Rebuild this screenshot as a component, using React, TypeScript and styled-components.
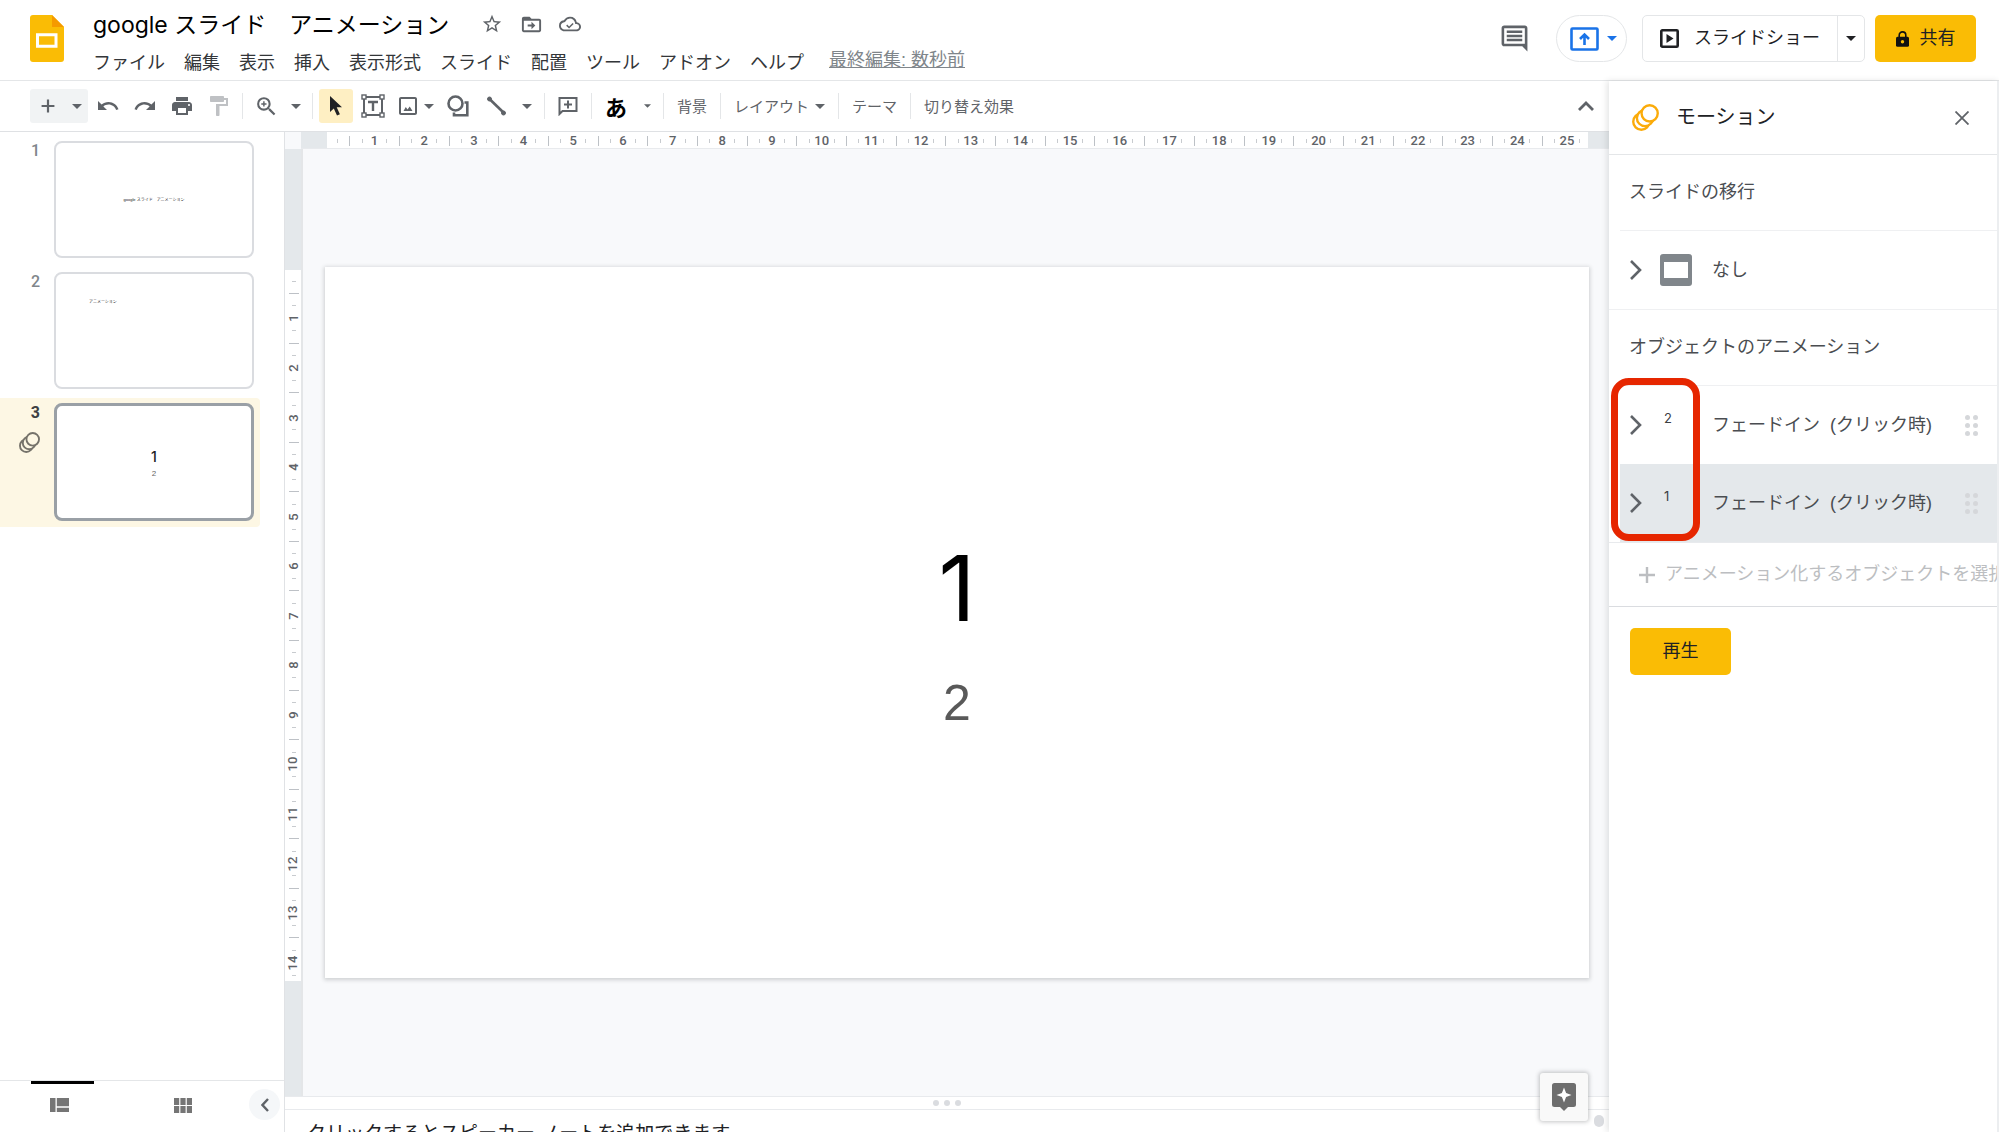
import React from "react";
import styled, { createGlobalStyle } from "styled-components";

const GlobalStyle = createGlobalStyle`
  *, *::before, *::after { box-sizing: border-box; }
  body { margin: 0; background: #fff; }
  body, button, input, textarea {
    font-family: "Liberation Sans", "Noto Sans CJK JP", sans-serif;
  }
  button {
    border: 0; padding: 0; margin: 0; background: none; color: inherit;
    font-size: 18px; display: inline-flex; align-items: center; justify-content: center;
    flex: none; white-space: nowrap; cursor: pointer;
  }
  h1, h2, h3, p, ul, ol { margin: 0; padding: 0; font-weight: 400; list-style: none; }
  svg { display: block; flex: none; }
`;

const gray = "#5f6368";
const line = "#e4e6e8";
const digits = `Inter, "Liberation Sans", sans-serif`;

const Page = styled.div`
  height: 100vh;
  display: flex;
  flex-direction: column;
  overflow: hidden;
  color: #202124;
`;

/* ---------- header ---------- */

const Header = styled.header`
  flex: none;
  display: flex;
  height: 81px;
  padding: 0 23px 0 30px;
  border-bottom: 1px solid ${line};
`;

const Logo = styled.a`
  margin-top: 15px;
  width: 34px;
`;

const Titles = styled.div`
  flex: 1;
  min-width: 0;
  padding: 7px 0 0 29px;
`;

const TitleRow = styled.div`
  display: flex;
  align-items: center;
  height: 34px;
  gap: 13px;
  color: ${gray};
`;

const DocTitle = styled.input`
  width: 373px;
  height: 34px;
  border: 0;
  padding: 0 0 3px;
  font-family: Inter, "Noto Sans CJK JP", sans-serif;
  font-size: 23px;
  color: #000;
  background: none;
`;

const SmallIconButton = styled.button`
  width: 26px;
  height: 26px;
`;

const MenuRow = styled.nav`
  display: flex;
  align-items: center;
  height: 40px;
  gap: 19px;
`;

const MenuItem = styled.button`
  height: 28px;
  color: #333639;
`;

const LastEdit = styled.a`
  margin-left: 6px;
  padding-bottom: 3px;
  font-size: 18px;
  line-height: 24px;
  white-space: nowrap;
  color: #80868b;
  text-decoration: underline;
`;

const Actions = styled.div`
  flex: none;
  display: flex;
  align-items: flex-start;
  padding-top: 15px;
`;

const CommentsButton = styled.button`
  width: 48px;
  height: 46px;
  margin-right: 18px;
  color: ${gray};
`;

const PresentButton = styled.button`
  width: 71px;
  height: 47px;
  gap: 8px;
  margin-right: 15px;
  padding-left: 4px;
  border: 1px solid ${line};
  border-radius: 24px;
  color: #1a73e8;
`;

const SlideshowGroup = styled.div`
  display: flex;
  height: 47px;
  margin-right: 10px;
  border: 1px solid ${line};
  border-radius: 5px;
`;

const SlideshowButton = styled.button`
  width: 194px;
  gap: 15px;
`;

const SlideshowMore = styled.button`
  width: 27px;
  border-left: 1px solid ${line};
`;

const YellowButton = styled.button`
  width: 101px;
  height: 47px;
  gap: 11px;
  border-radius: 5px;
  background: #fabc05;
  color: #202124;
`;

const ButtonText = styled.span`
  padding-bottom: 6px;
`;

/* ---------- body layout ---------- */

const Below = styled.div`
  flex: 1;
  min-height: 0;
  display: flex;
`;

const Editor = styled.div`
  flex: 1;
  min-width: 0;
  display: flex;
  flex-direction: column;
`;

const Toolbar = styled.div`
  flex: none;
  display: flex;
  align-items: center;
  gap: 3px;
  height: 51px;
  padding: 0 6px 0 30px;
  border-bottom: 1px solid #dfe1e4;
  color: ${gray};
`;

const NewGroup = styled.div`
  display: flex;
  height: 34px;
  background: #f1f3f4;
  border-radius: 3px;
`;

const Tool = styled.button<{ $w?: number; $on?: boolean; $off?: boolean }>`
  width: ${(p) => p.$w ?? 34}px;
  height: 34px;
  gap: 4px;
  border-radius: 3px;
  background: ${(p) => (p.$on ? "#feefc3" : "none")};
  color: ${(p) => (p.$on ? "#202124" : p.$off ? "#bfc1c4" : "inherit")};
`;

const InputTool = styled(Tool)`
  font-size: 22px;
  font-weight: 700;
  color: #000;
`;

const TextTool = styled.button`
  height: 34px;
  padding: 0 7px;
  gap: 6px;
  font-size: 15px;
  & > span { padding-bottom: 2px; }
`;

const Separator = styled.span`
  width: 1px;
  height: 26px;
  margin: 0 3px;
  background: #e4e6e8;
`;

const Grow = styled.span`
  flex: 1;
`;

const Work = styled.div`
  flex: 1;
  min-height: 0;
  display: flex;
`;

/* ---------- filmstrip ---------- */

const Filmstrip = styled.aside`
  flex: none;
  width: 285px;
  display: flex;
  flex-direction: column;
  border-right: 1px solid #e0e2e5;
`;

const ThumbList = styled.ol`
  flex: 1;
  min-height: 0;
  padding-top: 4px;
  display: flex;
  flex-direction: column;
  gap: 2px;
`;

const ThumbRow = styled.li<{ $on?: boolean }>`
  width: 260px;
  height: 129px;
  padding: 5px 6px 0 0;
  display: flex;
  border-radius: 0 4px 4px 0;
  background: ${(p) => (p.$on ? "#fdf7e4" : "none")};
`;

const ThumbSide = styled.div<{ $on?: boolean }>`
  width: 54px;
  padding: 0 14px 0 18px;
  display: flex;
  flex-direction: column;
  align-items: flex-end;
  gap: 9px;
  font: 500 16px/20px Roboto, "Liberation Sans", sans-serif;
  font-weight: ${(p) => (p.$on ? 700 : 500)};
  color: ${(p) => (p.$on ? "#3c4043" : "#80868b")};
`;

const Thumb = styled.button<{ $on?: boolean; $titleOnly?: boolean }>`
  width: 200px;
  height: ${(p) => (p.$on ? 118 : 117)}px;
  flex-direction: column;
  justify-content: ${(p) => (p.$titleOnly ? "flex-start" : "center")};
  align-items: ${(p) => (p.$titleOnly ? "flex-start" : "center")};
  padding: ${(p) => (p.$titleOnly ? "25px 33px" : "0")};
  border: ${(p) => (p.$on ? "3px solid #9aa0a6" : "2px solid #dadce0")};
  border-radius: 8px;
  background: #fff;
  color: #202124;
`;

const ThumbCaption = styled.span`
  font-size: 4px;
  line-height: 6px;
`;

const ThumbBig = styled.span`
  margin-top: 4px;
  font-family: ${digits};
  font-size: 14px;
  font-weight: 500;
  line-height: 16px;
`;

const ThumbSmall = styled.span`
  margin-top: 4px;
  font-size: 8px;
  line-height: 10px;
  color: #666;
`;

const ViewBar = styled.div`
  flex: none;
  height: 52px;
  display: flex;
  justify-content: space-between;
  padding: 0 4px 0 31px;
  border-top: 1px solid ${line};
`;

const ViewTabs = styled.div`
  display: flex;
  gap: 60px;
`;

const ViewTab = styled.button<{ $on?: boolean }>`
  width: 63px;
  padding: 0 6px 6px 0;
  border-top: 3px solid ${(p) => (p.$on ? "#000" : "transparent")};
  color: #757575;
`;

const Collapse = styled.button`
  width: 31px;
  height: 31px;
  margin-top: 8px;
  border-radius: 16px;
  background: #f5f7f9;
  color: ${gray};
`;

/* ---------- canvas ---------- */

const Center = styled.main`
  flex: 1;
  min-width: 0;
  display: flex;
  flex-direction: column;
  position: relative;
`;

const Stage = styled.div`
  flex: 1;
  min-height: 0;
  display: grid;
  grid-template-columns: 16px 24px 1fr 20px;
  grid-template-rows: 17px 1fr auto 1fr;
  background: #f8f9fb;
`;

const RulerX = styled.div`
  grid-area: 1 / 2 / 2 / 5;
  display: flex;
  padding: 0 21px 0 26px;
  border-bottom: 1px solid #e8eaed;
  background: #e4e8eb;
`;

const RulerYTrack = styled.div`
  grid-area: 2 / 1 / 5 / 2;
  background: #e4e8eb;
`;

const CanvasEdge = styled.div`
  grid-area: 2 / 2 / 5 / 5;
  border-left: 2px solid #e4e6e8;
`;

const ScaleX = styled.div`
  flex: 1;
  display: flex;
  padding: 1px 2px 0 4px;
  background: #fff;
`;

const ScaleY = styled.div`
  grid-area: 3 / 1 / 4 / 2;
  display: flex;
  flex-direction: column;
  min-height: 0;
  margin: 3px 0 -3px;
  padding: 5px 0 0 1px;
  background: #fff;
`;

const Slot = styled.span`
  flex: 1 1 0;
  min-width: 0;
  min-height: 0;
  display: flex;
  align-items: center;
  justify-content: center;
  font: 500 13px/16px Roboto, "Liberation Sans", sans-serif;
  color: ${gray};
`;

const TickX = styled.i<{ $long?: boolean }>`
  width: 1px;
  height: ${(p) => (p.$long ? 10 : 4)}px;
  background: ${(p) => (p.$long ? "#bdc1c6" : "#c8cbcf")};
`;

const TickY = styled.i<{ $long?: boolean }>`
  height: 1px;
  width: ${(p) => (p.$long ? 10 : 4)}px;
  background: ${(p) => (p.$long ? "#bdc1c6" : "#c8cbcf")};
`;

const Upright = styled.span`
  transform: rotate(-90deg);
`;

const Slide = styled.section`
  grid-area: 3 / 3 / 4 / 4;
  aspect-ratio: 16 / 9;
  display: flex;
  flex-direction: column;
  align-items: center;
  padding-top: 269px;
  background: #fff;
  box-shadow: 0 1px 4px 1px rgba(60, 64, 67, 0.22);
`;

const SlideTitle = styled.h1`
  font-family: ${digits};
  font-size: 91px;
  line-height: 104px;
  color: #000;
`;

const SlideSubtitle = styled.p`
  margin-top: 35px;
  font-size: 50px;
  line-height: 56px;
  color: #595959;
`;

const Splitter = styled.div`
  flex: none;
  display: flex;
  align-items: center;
  justify-content: center;
  gap: 5px;
  height: 14px;
  border: solid #e8eaed;
  border-width: 1px 0;
`;

const Dot = styled.i`
  width: 6px;
  height: 6px;
  border-radius: 3px;
  background: #dadce0;
`;

const Notes = styled.textarea`
  flex: none;
  width: 100%;
  height: 22px;
  border: 0;
  padding: 10px 60px 0 22px;
  font-size: 19px;
  line-height: 28px;
  resize: none;
  overflow: hidden;
  background: #fff;
  &::placeholder { color: #202124; opacity: 1; }
`;

const Explore = styled.button`
  position: absolute;
  right: 21px;
  bottom: 11px;
  width: 48px;
  height: 48px;
  border-radius: 3px;
  background: #f9f9f9;
  color: #6e6e6e;
  box-shadow: 0 0 4px 1px rgba(60, 64, 67, 0.3);
`;

const ScrollKnob = styled.i`
  position: absolute;
  right: 5px;
  bottom: 5px;
  width: 10px;
  height: 12px;
  border-radius: 5px;
  background: #dadce0;
`;

/* ---------- motion panel ---------- */

const Panel = styled.aside`
  flex: none;
  width: 390px;
  position: relative;
  border-right: 2px solid #eceef0;
  background: #fff;
  box-shadow: -2px 0 6px rgba(60, 64, 67, 0.14);
`;

const PanelHead = styled.div`
  display: flex;
  align-items: center;
  height: 74px;
  padding: 0 20px 0 23px;
  border-bottom: 1px solid ${line};
`;

const PanelTitle = styled.h2`
  flex: 1;
  margin-left: 17px;
  padding-bottom: 2px;
  font-size: 20px;
  line-height: 28px;
`;

const CloseButton = styled.button`
  width: 30px;
  height: 30px;
  color: ${gray};
`;

const SectionTitle = styled.h3`
  display: flex;
  align-items: center;
  height: 76px;
  margin-left: 11px;
  padding: 0 0 6px 9px;
  border-bottom: 1px solid #eff0f2;
  font-size: 18px;
  color: #4a4d51;
`;

const Row = styled.li<{ $on?: boolean }>`
  display: flex;
  align-items: center;
  height: 78px;
  margin-left: 11px;
  padding: 0 19px 0 9px;
  background: ${(p) => (p.$on ? "#e4e8eb" : "none")};
  color: #4a4d51;
`;

const TransitionRow = styled.div`
  display: flex;
  align-items: center;
  height: 79px;
  padding-left: 20px;
  border-bottom: 1px solid #eff0f2;
  color: #4a4d51;
`;

const Expand = styled.button`
  width: 14px;
  height: 30px;
  color: ${gray};
`;

const Badge = styled.span`
  width: 32px;
  height: 32px;
  margin: 0 20px 0 17px;
  padding-left: 4px;
  font-family: ${digits};
  font-size: 13px;
  line-height: 18px;
  color: #3c4043;
`;

const TransitionIcon = styled(Badge)`
  padding: 0;
`;

const RowLabel = styled.span`
  flex: 1;
  font-size: 18px;
  line-height: 26px;
  white-space: pre;
`;

const Grip = styled.span`
  display: grid;
  grid-template-columns: 5px 5px;
  gap: 3px;
  & > i { width: 5px; height: 5px; border-radius: 3px; background: #d5d7da; }
`;

const Animations = styled.div`
  position: relative;
  border-bottom: 1px solid #e8eaed;
`;

const Highlight = styled.div`
  position: absolute;
  left: 2px;
  top: -8px;
  width: 89px;
  height: 163px;
  border: 7px solid #e62600;
  border-radius: 18px;
  pointer-events: none;
`;

const AddRow = styled.div`
  display: flex;
  align-items: center;
  height: 64px;
  padding-left: 21px;
  border-bottom: 1px solid #dadce0;
  overflow: hidden;
`;

const AddButton = styled.button`
  padding: 0 9px;
  height: 32px;
  gap: 10px;
  color: #bcbec1;
`;

const PlayArea = styled.div`
  padding: 21px;
`;

/* ---------- icons ---------- */

const Icon = ({ size = 24, children }: { size?: number; children: React.ReactNode }) => (
  <svg width={size} height={size} viewBox="0 0 24 24" fill="currentColor" aria-hidden="true">
    {children}
  </svg>
);

const Caret = ({ small }: { small?: boolean }) => (
  <svg width={small ? 7 : 10} height={small ? 4 : 5} viewBox="0 0 10 5" fill="currentColor" aria-hidden="true">
    <path d="M0 0h10L5 5z" />
  </svg>
);

const MotionIcon = ({ size, color, fill }: { size: number; color: string; fill: string }) => (
  <svg width={size} height={size} viewBox="0 0 26 26" fill={fill} stroke={color} strokeWidth="2.300" aria-hidden="true">
    <circle cx="9" cy="17" r="7.800" />
    <circle cx="12.500" cy="13.500" r="7.800" />
    <circle cx="17" cy="9" r="7.800" />
  </svg>
);

const Chevron = () => (
  <svg width="12" height="20" viewBox="0 0 12 20" fill="none" stroke="currentColor" strokeWidth="2.600" aria-hidden="true">
    <path d="M1 1l9 9-9 9" />
  </svg>
);

/* ---------- data ---------- */

const menus = ["ファイル", "編集", "表示", "挿入", "表示形式", "スライド", "配置", "ツール", "アドオン", "ヘルプ"];
const animations = [
  { target: "2", label: "フェードイン  (クリック時)" },
  { target: "1", label: "フェードイン  (クリック時)", on: true },
];
const quarters = (count: number) => Array.from({ length: count }, (_, i) => i + 1);

export default function App() {
  return (
    <Page>
      <GlobalStyle />
      <Header>
        <Logo href="#" aria-label="スライドのホーム">
          <svg width="34" height="47" viewBox="0 0 34 47">
            <path d="M3 0h19l12 12v32a3 3 0 0 1-3 3H3a3 3 0 0 1-3-3V3a3 3 0 0 1 3-3z" fill="#fabc05" />
            <path d="M22 0l12 12H22z" fill="#f59a00" />
            <path d="M7.500 19.800h18.500v11.500H7.500z" fill="none" stroke="#fff" strokeWidth="3" />
          </svg>
        </Logo>
        <Titles>
          <TitleRow>
            <DocTitle aria-label="名前を変更" defaultValue="google スライド　アニメーション" />
            <SmallIconButton aria-label="スター">
              <Icon size={22}>
                <path d="M22 9.240l-7.190-.62L12 2 9.190 8.630 2 9.240l5.460 4.730L5.820 21 12 17.270 18.180 21l-1.630-7.030L22 9.240zM12 15.400l-3.760 2.270 1-4.280-3.320-2.880 4.380-.38L12 6.100l1.710 4.040 4.380.38-3.320 2.880 1 4.280L12 15.400z" />
              </Icon>
            </SmallIconButton>
            <SmallIconButton aria-label="移動">
              <Icon size={23}>
                <path d="M20 6h-8l-2-2H4c-1.100 0-2 .9-2 2v12c0 1.100.9 2 2 2h16c1.100 0 2-.9 2-2V8c0-1.100-.9-2-2-2zm0 12H4V8h16v10zm-8-1l4-4-4-4v3H8v2h4z" />
              </Icon>
            </SmallIconButton>
            <SmallIconButton aria-label="保存状況">
              <Icon size={22}>
                <path d="M19.350 10.040A7.490 7.490 0 0 0 12 4C9.110 4 6.600 5.640 5.350 8.040A5.994 5.994 0 0 0 0 14c0 3.310 2.690 6 6 6h13c2.760 0 5-2.240 5-5 0-2.640-2.050-4.780-4.650-4.960zM19 18H6c-2.210 0-4-1.790-4-4 0-2.050 1.530-3.760 3.560-3.970l1.070-.11.5-.95A5.469 5.469 0 0 1 12 6c2.620 0 4.880 1.860 5.390 4.430l.3 1.500 1.530.11A2.980 2.980 0 0 1 22 15c0 1.650-1.350 3-3 3z" />
                <path d="M11 14.600l-2-2L7.800 13.800 11 17l5-5-1.200-1.200z" />
              </Icon>
            </SmallIconButton>
          </TitleRow>
          <MenuRow>
            {menus.map((m) => (
              <MenuItem key={m}>{m}</MenuItem>
            ))}
            <LastEdit href="#">最終編集: 数秒前</LastEdit>
          </MenuRow>
        </Titles>
        <Actions>
          <CommentsButton aria-label="コメント履歴">
            <Icon size={31}>
              <path d="M22 4c0-1.100-.9-2-2-2H4c-1.100 0-2 .9-2 2v12c0 1.100.9 2 2 2h14l4 4V4zm-2 12H4V4h16v12z" />
              <path d="M6 5.800h12v2H6zm0 3.200h12v2H6zm0 3.200h12v2H6z" />
            </Icon>
          </CommentsButton>
          <PresentButton aria-label="会議で画面を共有">
            <svg width="29" height="24" viewBox="0 0 29 24" fill="none" stroke="currentColor" strokeWidth="2.600" aria-hidden="true">
              <rect x="1.500" y="1.500" width="26" height="21" rx="1" />
              <path d="M14.500 18V8M10 12l4.500-4.500L19 12" />
            </svg>
            <Caret />
          </PresentButton>
          <SlideshowGroup>
            <SlideshowButton>
              <svg width="19" height="19" viewBox="0 0 19 19" aria-hidden="true">
                <rect x="1.300" y="1.300" width="16.400" height="16.400" rx="1" fill="none" stroke="#202124" strokeWidth="2.600" />
                <path d="M6.500 5v9l7-4.500z" fill="#202124" />
              </svg>
              <ButtonText>スライドショー</ButtonText>
            </SlideshowButton>
            <SlideshowMore aria-label="スライドショーのオプション">
              <Caret />
            </SlideshowMore>
          </SlideshowGroup>
          <YellowButton>
            <svg width="13" height="16" viewBox="0 0 13 16" aria-hidden="true">
              <path d="M3.200 7V4.200a3.300 3.300 0 0 1 6.600 0V7" fill="none" stroke="#111" strokeWidth="1.600" />
              <rect y="5.800" width="13" height="10" rx="1.500" fill="#111" />
              <circle cx="6.500" cy="10.800" r="1.700" fill="#fabc05" />
            </svg>
            <ButtonText>共有</ButtonText>
          </YellowButton>
        </Actions>
      </Header>

      <Below>
        <Editor>
          <Toolbar role="toolbar">
            <NewGroup>
              <Tool $w={36} aria-label="新しいスライド">
                <Icon size={22}>
                  <path d="M19 13.200h-5.800V19h-2.400v-5.800H5v-2.400h5.800V5h2.400v5.800H19z" />
                </Icon>
              </Tool>
              <Tool $w={22} aria-label="レイアウト付きの新しいスライド">
                <Caret />
              </Tool>
            </NewGroup>
            <Tool aria-label="元に戻す">
              <Icon>
                <path d="M12.500 8c-2.650 0-5.050.99-6.900 2.600L2 7v9h9l-3.620-3.620c1.390-1.160 3.160-1.880 5.120-1.880 3.540 0 6.550 2.310 7.600 5.500l2.370-.78C21.080 11.030 17.150 8 12.500 8z" />
              </Icon>
            </Tool>
            <Tool aria-label="やり直し">
              <Icon>
                <path d="M18.400 10.600C16.550 8.990 14.150 8 11.500 8c-4.650 0-8.580 3.030-9.960 7.220L3.900 16c1.050-3.190 4.050-5.500 7.600-5.500 1.950 0 3.730.72 5.120 1.880L13 16h9V7l-3.600 3.600z" />
              </Icon>
            </Tool>
            <Tool aria-label="印刷">
              <Icon>
                <path d="M19 8H5c-1.660 0-3 1.340-3 3v6h4v4h12v-4h4v-6c0-1.660-1.340-3-3-3zm-3 11H8v-5h8v5zm3-7c-.55 0-1-.45-1-1s.45-1 1-1 1 .45 1 1-.45 1-1 1zm-1-9H6v4h12V3z" />
              </Icon>
            </Tool>
            <Tool $off aria-label="書式の貼り付け">
              <Icon>
                <path d="M17 4V3c0-.55-.45-1-1-1H4c-.55 0-1 .45-1 1v4c0 .55.45 1 1 1h12c.55 0 1-.45 1-1V6h2v4H9v11c0 .55.45 1 1 1h1.500c.55 0 1-.45 1-1v-9H21V4h-4z" />
              </Icon>
            </Tool>
            <Separator />
            <Tool aria-label="ズーム">
              <Icon size={25}>
                <path d="M15.500 14h-.79l-.28-.27A6.471 6.471 0 0 0 16 9.500 6.500 6.500 0 1 0 9.500 16c1.610 0 3.090-.59 4.230-1.570l.27.28v.79l5 4.990L20.490 19l-4.990-5zm-6 0C7.010 14 5 11.990 5 9.500S7.010 5 9.500 5 14 7.010 14 9.500 11.990 14 9.500 14z" />
                <path d="M12 10.200h-1.800V12H8.800v-1.800H7V8.800h1.800V7h1.400v1.800H12z" />
              </Icon>
            </Tool>
            <Tool $w={20} aria-label="ズームのオプション">
              <Caret />
            </Tool>
            <Separator />
            <Tool $on aria-label="選択">
              <svg width="12" height="20" viewBox="0 0 12 20" fill="#202124" aria-hidden="true">
                <path d="M0 0v16l3.800-3.600 3.200 7.200 2.900-1.300-3.200-7H12z" />
              </svg>
            </Tool>
            <Tool aria-label="テキスト ボックス">
              <svg width="24" height="24" viewBox="0 0 24 24" fill="none" stroke="currentColor" aria-hidden="true">
                <rect x="3" y="3" width="18" height="18" strokeWidth="2" />
                <g fill="#fff" strokeWidth="1.400">
                  <rect x="1" y="1" width="4" height="4" />
                  <rect x="19" y="1" width="4" height="4" />
                  <rect x="1" y="19" width="4" height="4" />
                  <rect x="19" y="19" width="4" height="4" />
                </g>
                <path d="M7 8h10M12 8v9" strokeWidth="2.400" />
              </svg>
            </Tool>
            <Tool $w={44} aria-label="画像を挿入">
              <Icon>
                <path d="M19 5v14H5V5h14m0-2H5c-1.100 0-2 .9-2 2v14c0 1.100.9 2 2 2h14c1.100 0 2-.9 2-2V5c0-1.100-.9-2-2-2z" />
                <path d="M7.500 17l2.300-4 1.700 2.400 2.200-3 2.800 4.600z" />
              </Icon>
              <Caret />
            </Tool>
            <Tool $w={36} aria-label="図形">
              <svg width="22" height="22" viewBox="0 0 22 22" fill="none" stroke="currentColor" strokeWidth="2.600" aria-hidden="true">
                <circle cx="8.500" cy="8.500" r="7" />
                <path d="M17.500 7.500H20.300v12.800H7V17.500" />
              </svg>
            </Tool>
            <Tool aria-label="線">
              <svg width="20" height="20" viewBox="0 0 20 20" fill="currentColor" stroke="currentColor" aria-hidden="true">
                <path d="M3.500 3L18 17" strokeWidth="2.600" />
                <circle cx="3.500" cy="3" r="2" />
                <circle cx="17.500" cy="17" r="2" />
              </svg>
            </Tool>
            <Tool $w={22} aria-label="線の種類">
              <Caret />
            </Tool>
            <Separator />
            <Tool aria-label="コメントを追加">
              <svg width="20" height="20" viewBox="0 0 20 20" fill="none" stroke="currentColor" strokeWidth="2" aria-hidden="true">
                <path d="M1.500 18V2h17v13H4.500zM10 4.500v8M6 8.500h8" />
              </svg>
            </Tool>
            <Separator />
            <InputTool $w={36} aria-label="入力ツール">あ</InputTool>
            <Tool $w={20} aria-label="入力ツールの選択">
              <Caret small />
            </Tool>
            <Separator />
            <TextTool><span>背景</span></TextTool>
            <Separator />
            <TextTool>
              <span>レイアウト</span>
              <Caret />
            </TextTool>
            <Separator />
            <TextTool><span>テーマ</span></TextTool>
            <Separator />
            <TextTool><span>切り替え効果</span></TextTool>
            <Grow />
            <Tool aria-label="メニューを非表示">
              <svg width="16" height="10" viewBox="0 0 16 10" fill="none" stroke="currentColor" strokeWidth="2.800" aria-hidden="true">
                <path d="M1 9l7-7 7 7" />
              </svg>
            </Tool>
          </Toolbar>

          <Work>
            <Filmstrip>
              <ThumbList>
                <ThumbRow>
                  <ThumbSide>1</ThumbSide>
                  <Thumb>
                    <ThumbCaption>google スライド　アニメーション</ThumbCaption>
                  </Thumb>
                </ThumbRow>
                <ThumbRow>
                  <ThumbSide>2</ThumbSide>
                  <Thumb $titleOnly>
                    <ThumbCaption>アニメーション</ThumbCaption>
                  </Thumb>
                </ThumbRow>
                <ThumbRow $on>
                  <ThumbSide $on>
                    3
                    <MotionIcon size={21} color="#75726a" fill="#fdf7e4" />
                  </ThumbSide>
                  <Thumb $on>
                    <ThumbBig>1</ThumbBig>
                    <ThumbSmall>2</ThumbSmall>
                  </Thumb>
                </ThumbRow>
              </ThumbList>
              <ViewBar>
                <ViewTabs>
                  <ViewTab $on aria-label="フィルムストリップ表示">
                    <svg width="19" height="14" viewBox="0 0 19 14" fill="currentColor" aria-hidden="true">
                      <path d="M0 0h5.500v14H0zM6.800 0H19v8.300H6.800zM6.800 9.700H19V14H6.800z" />
                    </svg>
                  </ViewTab>
                  <ViewTab aria-label="グリッド表示">
                    <svg width="18" height="15" viewBox="0 0 18 15" fill="currentColor" aria-hidden="true">
                      <path d="M0 0h5.200v6.900H0zM6.400 0h5.200v6.900H6.400zM12.800 0H18v6.900h-5.200zM0 8.100h5.200V15H0zM6.400 8.100h5.200V15H6.400zM12.800 8.100H18V15h-5.200z" />
                    </svg>
                  </ViewTab>
                </ViewTabs>
                <Collapse aria-label="フィルムストリップを閉じる">
                  <svg width="8" height="14" viewBox="0 0 8 14" fill="none" stroke="currentColor" strokeWidth="2.400" aria-hidden="true">
                    <path d="M7 1L1.500 7 7 13" />
                  </svg>
                </Collapse>
              </ViewBar>
            </Filmstrip>

            <Center>
              <Stage>
                <RulerX>
                  <ScaleX>
                    {quarters(101).map((q) => (
                      <Slot key={q}>{q % 4 === 0 ? q / 4 : <TickX $long={q % 4 === 2} />}</Slot>
                    ))}
                  </ScaleX>
                </RulerX>
                <RulerYTrack />
                <CanvasEdge />
                <ScaleY>
                  {quarters(57).map((q) => (
                    <Slot key={q}>
                      {q % 4 === 0 ? <Upright>{q / 4}</Upright> : <TickY $long={q % 4 === 2} />}
                    </Slot>
                  ))}
                </ScaleY>
                <Slide>
                  <SlideTitle>1</SlideTitle>
                  <SlideSubtitle>2</SlideSubtitle>
                </Slide>
              </Stage>
              <Splitter>
                <Dot />
                <Dot />
                <Dot />
              </Splitter>
              <Notes aria-label="スピーカー ノート" placeholder="クリックするとスピーカー ノートを追加できます" />
              <Explore aria-label="データ探索">
                <svg width="24" height="28" viewBox="0 0 24 28" fill="currentColor" aria-hidden="true">
                  <path d="M2.500 0h19A2.500 2.500 0 0 1 24 2.500v19a2.500 2.500 0 0 1-2.500 2.500H16l-4 4-4-4H2.500A2.500 2.500 0 0 1 0 21.500v-19A2.500 2.500 0 0 1 2.500 0z" />
                  <path d="M12 4.500l2.100 5.400 5.400 2.100-5.400 2.100L12 19.500l-2.100-5.400L4.500 12l5.400-2.100z" fill="#fff" />
                </svg>
              </Explore>
              <ScrollKnob />
            </Center>
          </Work>
        </Editor>

        <Panel>
          <PanelHead>
            <MotionIcon size={27} color="#fbab09" fill="#fff" />
            <PanelTitle>モーション</PanelTitle>
            <CloseButton aria-label="閉じる">
              <svg width="14" height="14" viewBox="0 0 14 14" stroke="currentColor" strokeWidth="1.800" aria-hidden="true">
                <path d="M.5.500l13 13M13.500.500l-13 13" />
              </svg>
            </CloseButton>
          </PanelHead>
          <SectionTitle>スライドの移行</SectionTitle>
          <TransitionRow>
            <Expand aria-label="展開">
              <Chevron />
            </Expand>
            <TransitionIcon>
              <svg width="32" height="32" viewBox="0 0 32 32" aria-hidden="true">
                <rect width="32" height="32" rx="3" fill="#80868b" />
                <rect x="4" y="8" width="24" height="16" fill="#fff" />
              </svg>
            </TransitionIcon>
            <RowLabel>なし</RowLabel>
          </TransitionRow>
          <SectionTitle>オブジェクトのアニメーション</SectionTitle>
          <Animations>
            <ul>
              {animations.map((a) => (
                <Row key={a.target} $on={a.on}>
                  <Expand aria-label="展開">
                    <Chevron />
                  </Expand>
                  <Badge>{a.target}</Badge>
                  <RowLabel>{a.label}</RowLabel>
                  <Grip>
                    <i />
                    <i />
                    <i />
                    <i />
                    <i />
                    <i />
                  </Grip>
                </Row>
              ))}
            </ul>
            <Highlight />
          </Animations>
          <AddRow>
            <AddButton>
              <svg width="16" height="16" viewBox="0 0 16 16" stroke="currentColor" strokeWidth="2.400" aria-hidden="true">
                <path d="M8 0v16M0 8h16" />
              </svg>
              <ButtonText>アニメーション化するオブジェクトを選択</ButtonText>
            </AddButton>
          </AddRow>
          <PlayArea>
            <YellowButton>
              <ButtonText>再生</ButtonText>
            </YellowButton>
          </PlayArea>
        </Panel>
      </Below>
    </Page>
  );
}
